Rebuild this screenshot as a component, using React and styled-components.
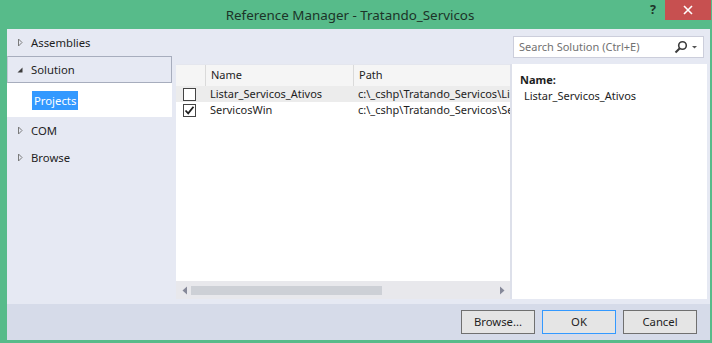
import React from 'react';
import styled, { createGlobalStyle } from 'styled-components';

const GlobalStyle = createGlobalStyle`
	html, body {
		margin: 0;
		padding: 0;
		background: #57bb8a;
	}
	body {
		font-family: 'Noto Sans', 'Open Sans', sans-serif;
		font-size: 11px;
		color: #1e1e1e;
	}
`;

const navItems = [
	{ label: 'Assemblies', open: false },
	{ label: 'Solution', open: true, children: ['Projects'] },
	{ label: 'COM', open: false },
	{ label: 'Browse', open: false },
];

const projects = [
	{ name: 'Listar_Servicos_Ativos', path: 'c:\\_cshp\\Tratando_Servicos\\Listar_Servicos_Ativos', checked: false, selected: true },
	{ name: 'ServicosWin', path: 'c:\\_cshp\\Tratando_Servicos\\ServicosWin', checked: true, selected: false },
];

function Arrow({ open }) {
	if (open) {
		return (
			<svg width="8" height="8" viewBox="0 0 8 8">
				<path d="M6.5 1.5 L6.5 6.5 L1.5 6.5 Z" fill="#3c3c3c" />
			</svg>
		);
	}
	return (
		<svg width="8" height="9" viewBox="0 0 8 9">
			<path d="M2.5 1 L6 4.5 L2.5 8 Z" fill="none" stroke="#7a7a7a" strokeWidth="1" />
		</svg>
	);
}

function Check({ checked }) {
	return (
		<CheckBox>
			{checked && (
				<svg width="11" height="11" viewBox="0 0 11 11">
					<path d="M1.5 5.5 L4.2 8.3 L9.5 1.8" fill="none" stroke="#1e1e1e" strokeWidth="1.8" />
				</svg>
			)}
		</CheckBox>
	);
}

function App() {
	return (
		<>
			<GlobalStyle />
			<Window>
				<TitleBar>
					<span />
					<Title>Reference Manager - Tratando_Servicos</Title>
					<Controls>
						<Help>?</Help>
						<Close>
							<svg width="10" height="10" viewBox="0 0 10 10">
								<path d="M1 1 L9 9 M9 1 L1 9" stroke="#fff" strokeWidth="1.6" />
							</svg>
						</Close>
					</Controls>
				</TitleBar>

				<Body>
					<Main>
						<Nav>
							{navItems.map(item => (
								<React.Fragment key={item.label}>
									<NavItem $open={item.open}>
										<ArrowWrap>
											<Arrow open={item.open} />
										</ArrowWrap>
										{item.label}
									</NavItem>
									{item.open &&
										item.children.map(c => (
											<SubItem key={c}>
												<Highlight>{c}</Highlight>
											</SubItem>
										))}
								</React.Fragment>
							))}
						</Nav>

						<Content>
							<SearchRow>
								<Search>
									<Placeholder>Search Solution (Ctrl+E)</Placeholder>
									<svg width="14" height="14" viewBox="0 0 14 14">
										<circle cx="8.5" cy="5.5" r="3.8" fill="none" stroke="#3c3c3c" strokeWidth="1.6" />
										<path d="M5.8 8.2 L1.5 12.5" stroke="#3c3c3c" strokeWidth="2" />
									</svg>
									<svg width="9" height="6" viewBox="0 0 9 6">
										<path d="M2 2 L7 2 L4.5 4.5 Z" fill="#555" />
									</svg>
								</Search>
							</SearchRow>

							<Panels>
								<ListPanel>
									<Table>
										<HeaderRow>
											<HeadCell />
											<HeadCell>Name</HeadCell>
											<HeadCell>Path</HeadCell>
										</HeaderRow>
										{projects.map(p => (
											<Row key={p.name} $selected={p.selected}>
												<CheckCell>
													<Check checked={p.checked} />
												</CheckCell>
												<Cell>{p.name}</Cell>
												<Cell>{p.path}</Cell>
											</Row>
										))}
									</Table>
									<HScroll>
										<svg width="6" height="9" viewBox="0 0 6 9">
											<path d="M5 0.5 L0.5 4.5 L5 8.5 Z" fill="#868999" />
										</svg>
										<Track>
											<Thumb />
										</Track>
										<svg width="6" height="9" viewBox="0 0 6 9">
											<path d="M1 0.5 L5.5 4.5 L1 8.5 Z" fill="#868999" />
										</svg>
									</HScroll>
								</ListPanel>
								<Details>
									<DetailLabel>Name:</DetailLabel>
									<DetailValue>Listar_Servicos_Ativos</DetailValue>
								</Details>
							</Panels>
						</Content>
					</Main>

					<Footer>
						<Button>Browse...</Button>
						<Button $default>OK</Button>
						<Button>Cancel</Button>
					</Footer>
				</Body>
			</Window>
		</>
	);
}

export default App;

const Window = styled.div`
	width: 712px;
	height: 343px;
	background: #57bb8a;
	display: flex;
	flex-direction: column;
	padding: 0 2px 3px 7px;
	box-sizing: border-box;
`;
const TitleBar = styled.div`
	height: 29px;
	flex: none;
	display: grid;
	grid-template-columns: 1fr auto 1fr;
	align-items: start;
	margin-left: -7px;
	margin-right: -2px;
`;
const Title = styled.div`
	font-size: 13.4px;
	line-height: 30px;
	color: #1c3328;
	padding-right: 12px;
`;
const Controls = styled.div`
	justify-self: end;
	display: flex;
	align-items: flex-start;
`;
const Help = styled.div`
	font-weight: bold;
	font-size: 12.5px;
	color: #1c3328;
	line-height: 20px;
	margin-right: 9px;
`;
const Close = styled.div`
	width: 46px;
	height: 20px;
	margin-right: 1px;
	background: #c75050;
	display: flex;
	align-items: center;
	justify-content: center;
`;
const Body = styled.div`
	flex: 1;
	display: flex;
	flex-direction: column;
	background: #e6e9f3;
	min-height: 0;
`;
const Main = styled.div`
	flex: 1;
	display: flex;
	min-height: 0;
`;
const Nav = styled.div`
	width: 169px;
	flex: none;
	padding: 0 4px 0 0;
	box-sizing: border-box;
`;
const NavItem = styled.div`
	height: 27px;
	display: flex;
	align-items: center;
	padding-left: 8px;
	box-sizing: border-box;
	border: 1px solid ${p => (p.$open ? '#a7adbd' : 'transparent')};
	border-left-color: ${p => (p.$open ? '#c3c8d6' : 'transparent')};
	font-size: 11.3px;
`;
const ArrowWrap = styled.span`
	width: 15px;
	display: flex;
	align-items: center;
`;
const SubItem = styled.div`
	height: 34px;
	background: #fff;
	display: flex;
	align-items: center;
	padding-left: 25px;
`;
const Highlight = styled.span`
	background: #3399ff;
	color: #fff;
	font-size: 11.3px;
	padding: 0 2px;
	line-height: 19px;
`;
const Content = styled.div`
	flex: 1;
	display: flex;
	flex-direction: column;
	padding-right: 3px;
	min-width: 0;
`;
const SearchRow = styled.div`
	height: 35px;
	flex: none;
	display: flex;
	justify-content: flex-end;
	align-items: center;
	padding-right: 3px;
`;
const Search = styled.div`
	width: 191px;
	height: 22px;
	box-sizing: border-box;
	background: #fff;
	border: 1px solid #cccedb;
	display: flex;
	align-items: center;
	padding: 0 4px 0 5px;
	gap: 2px;
`;
const Placeholder = styled.span`
	flex: 1;
	color: #717171;
	font-size: 11px;
`;
const Panels = styled.div`
	flex: 1;
	display: flex;
	min-height: 0;
`;
const ListPanel = styled.div`
	width: 334px;
	flex: none;
	background: #fff;
	display: flex;
	flex-direction: column;
	border-right: 2px solid #dde0ea;
`;
const Table = styled.div`
	flex: 1;
	overflow: hidden;
`;
const HeaderRow = styled.div`
	display: grid;
	grid-template-columns: 29px 148px 1fr;
	height: 21px;
	background: #f5f5f5;
	border-top: 1px solid #e4e6ee;
`;
const HeadCell = styled.div`
	border-left: 1px solid #dadada;
	padding-left: 5px;
	line-height: 20px;
	white-space: nowrap;
	&:first-child {
		border-left: none;
	}
`;
const Row = styled.div`
	display: grid;
	grid-template-columns: 29px 148px 1fr;
	height: 16px;
	background: ${p => (p.$selected ? '#ececec' : '#fff')};
	align-items: center;
`;
const Cell = styled.div`
	padding-left: 5px;
	white-space: nowrap;
	overflow: hidden;
	line-height: 16px;
`;
const CheckCell = styled.div`
	display: flex;
	align-items: center;
	padding-left: 7px;
`;
const CheckBox = styled.div`
	width: 13px;
	height: 13px;
	box-sizing: border-box;
	border: 1px solid #444;
	background: #fff;
	display: flex;
	align-items: center;
	justify-content: center;
`;
const HScroll = styled.div`
	height: 18px;
	flex: none;
	background: #e8e8ec;
	display: flex;
	align-items: center;
	padding: 0 5px 0 6px;
	gap: 3px;
`;
const Track = styled.div`
	flex: 1;
	height: 9px;
`;
const Thumb = styled.div`
	width: 191px;
	height: 9px;
	background: #cdd0d6;
`;
const Details = styled.div`
	flex: 1;
	background: #fff;
	padding: 8px 8px;
	display: flex;
	flex-direction: column;
	gap: 1px;
`;
const DetailLabel = styled.div`
	font-weight: bold;
	line-height: 15px;
`;
const DetailValue = styled.div`
	padding-left: 4px;
	line-height: 15px;
`;
const Footer = styled.div`
	height: 35px;
	flex: none;
	margin-top: 5px;
	background: #d6dbe9;
	display: flex;
	justify-content: flex-end;
	align-items: center;
	gap: 7px;
	padding: 0 13px 1px 0;
`;
const Button = styled.button`
	width: 74px;
	height: 24px;
	font-family: inherit;
	font-size: 11.3px;
	color: #1e1e1e;
	background: #e5e5e5;
	border: 1px solid ${p => (p.$default ? '#3399ff' : '#707070')};
	padding: 0;
`;
